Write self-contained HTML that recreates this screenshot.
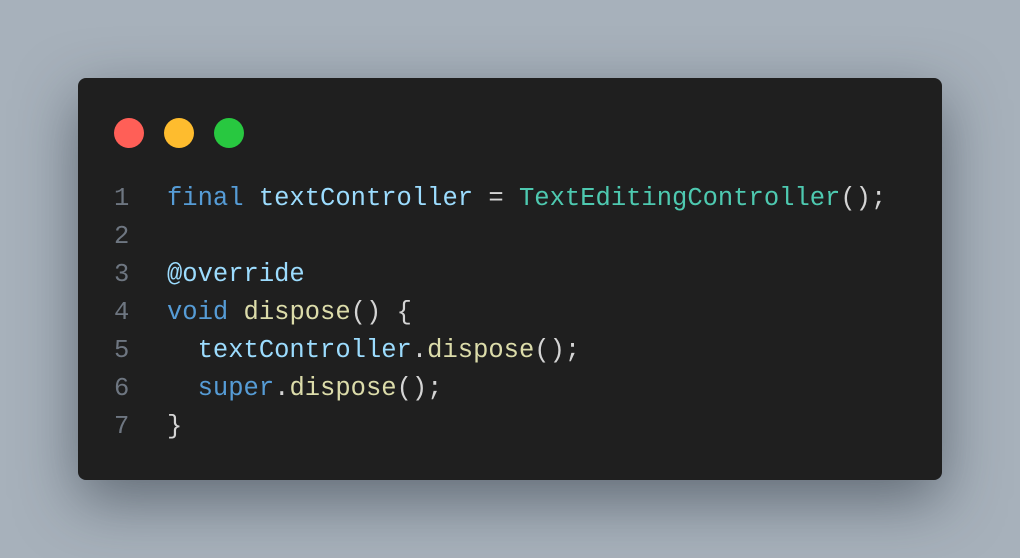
<!DOCTYPE html>
<html><head><style>
html,body{margin:0;padding:0;}
body{width:1020px;height:558px;background:#a7b1bb;position:relative;overflow:hidden;font-family:"Liberation Mono",monospace;}
.card{position:absolute;left:78px;top:78px;width:864px;height:402px;background:#1f1f1f;border-radius:8px;box-shadow:0 20px 60px rgba(40,50,60,0.55);}
.dot{position:absolute;top:40px;width:30px;height:30px;border-radius:50%;}
.code{position:absolute;left:0;top:102px;font-size:25.5px;line-height:38px;white-space:pre;}
.ln{position:absolute;left:36px;width:20px;color:#6e7681;}
.tx{position:absolute;left:89px;color:#d4d4d4;}
.k{color:#569cd6}.v{color:#9cdcfe}.t{color:#4ec9b0}.f{color:#dcdcaa}
</style></head><body>
<div class="card">
<div class="dot" style="left:36px;background:#ff5f57"></div>
<div class="dot" style="left:86px;background:#febc2e"></div>
<div class="dot" style="left:136px;background:#28c840"></div>
<div class="code"><div class="ln">1
2
3
4
5
6
7</div><div class="tx"><span class="k">final</span> <span class="v">textController</span> = <span class="t">TextEditingController</span>();

<span class="v">@override</span>
<span class="k">void</span> <span class="f">dispose</span>() {
  <span class="v">textController</span>.<span class="f">dispose</span>();
  <span class="k">super</span>.<span class="f">dispose</span>();
}</div></div>
</div>
</body></html>
